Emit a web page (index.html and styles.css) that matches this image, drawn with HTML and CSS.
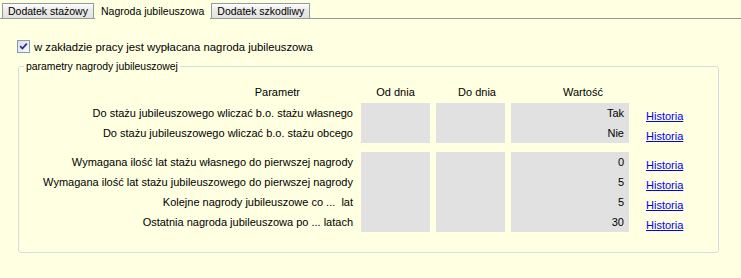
FILE: index.html
```html
<!DOCTYPE html>
<html lang="pl">
<head>
<meta charset="utf-8">
<title>Nagroda jubileuszowa</title>
<link rel="stylesheet" href="styles.css">
</head>
<body>
<div class="tabs">
  <div class="tab">Dodatek stażowy</div>
  <div class="tab active">Nagroda jubileuszowa</div>
  <div class="tab">Dodatek szkodliwy</div>
</div>
<div class="panel">
  <label class="check">
    <span class="box"><svg width="11" height="11" viewBox="0 0 11 11"><path d="M2.2 5.2 L4.4 7.5 L8.8 2.6" fill="none" stroke="#2b2b9c" stroke-width="1.8"/></svg></span>
    <span class="check-text">w zakładzie pracy jest wypłacana nagroda jubileuszowa</span>
  </label>
  <fieldset class="params">
    <legend>parametry nagrody jubileuszowej</legend>
    <div class="head">
      <div class="col-label h-param">Parametr</div>
      <div class="col-d1 h-c">Od dnia</div>
      <div class="col-d2 h-c h-do">Do dnia</div>
      <div class="col-val h-c h-val">Wartość</div>
    </div>
    <div class="group">
      <div class="col-label rows">
        <div class="row">Do stażu jubileuszowego wliczać b.o. stażu własnego</div>
        <div class="row">Do stażu jubileuszowego wliczać b.o. stażu obcego</div>
      </div>
      <div class="col-d1 cell"></div>
      <div class="col-d2 cell"></div>
      <div class="col-val cell rows vals">
        <div class="row">Tak</div>
        <div class="row">Nie</div>
      </div>
      <div class="links rows">
        <a class="row" href="#">Historia</a>
        <a class="row" href="#">Historia</a>
      </div>
    </div>
    <div class="group g2">
      <div class="col-label rows">
        <div class="row">Wymagana ilość lat stażu własnego do pierwszej nagrody</div>
        <div class="row">Wymagana ilość lat stażu jubileuszowego do pierwszej nagrody</div>
        <div class="row">Kolejne nagrody jubileuszowe co ...&nbsp; lat</div>
        <div class="row">Ostatnia nagroda jubileuszowa po ... latach</div>
      </div>
      <div class="col-d1 cell"></div>
      <div class="col-d2 cell"></div>
      <div class="col-val cell rows vals">
        <div class="row">0</div>
        <div class="row">5</div>
        <div class="row">5</div>
        <div class="row">30</div>
      </div>
      <div class="links rows">
        <a class="row" href="#">Historia</a>
        <a class="row" href="#">Historia</a>
        <a class="row" href="#">Historia</a>
        <a class="row" href="#">Historia</a>
      </div>
    </div>
  </fieldset>
</div>
</body>
</html>
```
FILE: styles.css
```css
html, body {
  margin: 0;
  padding: 0;
  background: #ffffe1;
  height: 100%;
}
body {
  font-family: "Liberation Sans", Arial, sans-serif;
  font-size: 11px;
  color: #000;
}
.tabs {
  display: flex;
  align-items: flex-end;
  height: 18px;
  padding-left: 2px;
  border-bottom: 1px solid #919b9c;
}
.tab {
  height: 15px;
  line-height: 15px;
  box-sizing: border-box;
  padding: 0 5px;
  border: 1px solid #919b9c;
  border-bottom: none;
  background: linear-gradient(#fefefe, #ececea 40%, #e2e2de);
  font-size: 10.5px;
  margin-right: 1px;
}
.tab.active {
  height: 19px;
  line-height: 20px;
  margin-bottom: -1px;
  background: #ffffe1;
  border-color: #ffffe1;
  padding: 0 5px;
  margin-right: 1px;
}
.panel {
  padding: 21px 0 0 17px;
}
.check {
  display: flex;
  align-items: center;
  height: 13px;
  gap: 4px;
}
.check-text {
  font-size: 11.3px;
}
.box {
  width: 13px;
  height: 13px;
  box-sizing: border-box;
  border: 1px solid #7f9db9;
  background: linear-gradient(135deg, #dcdce4, #fafafa);
  display: flex;
  align-items: center;
  justify-content: center;
}
.box svg { display: block; }
.params {
  margin: 7px 0 0 1px;
  padding: 0 0 20px 0;
  width: 701px;
  box-sizing: border-box;
  border: 1px solid #d3dbe3;
  border-radius: 3px;
  min-width: 0;
}
.params legend {
  padding: 0 2px;
  margin-left: 5px;
  line-height: 13px;
  font-size: 10.4px;
}
.head, .group {
  display: flex;
}
.head {
  margin-top: 10px;
  height: 18px;
  line-height: 18px;
}
.group {
  margin-top: 2px;
  height: 40px;
}
.group.g2 {
  margin-top: 9px;
  height: 80px;
}
.col-label {
  width: 334px;
  text-align: right;
  flex: none;
}
.col-d1 {
  width: 69px;
  margin-left: 8px;
  flex: none;
}
.col-d2 {
  width: 69px;
  margin-left: 6px;
  flex: none;
}
.col-val {
  width: 118px;
  margin-left: 6px;
  flex: none;
}
.h-param { padding-right: 53px; box-sizing: border-box; }
.h-c { text-align: center; box-sizing: border-box; }
.h-do { padding-left: 13px; }
.h-val { padding-left: 26px; }
.cell {
  background: #e1e1e1;
}
.rows {
  display: flex;
  flex-direction: column;
}
.row {
  height: 20px;
  line-height: 20px;
  white-space: nowrap;
}
.vals {
  text-align: right;
  padding-right: 5px;
  box-sizing: border-box;
}
.links {
  margin-left: 17px;
  padding-top: 3px;
}
.links a {
  color: #0000ff;
  text-decoration: underline;
}
```
